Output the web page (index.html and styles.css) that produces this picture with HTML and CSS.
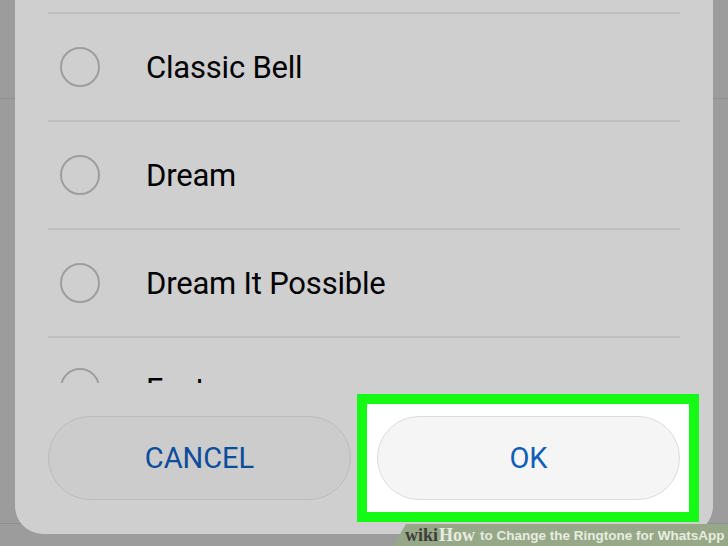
FILE: index.html
```html
<!DOCTYPE html>
<html>
<head>
<meta charset="utf-8">
<link rel="stylesheet" href="styles.css">
</head>
<body>
<div class="screen">
  <div class="dialog">
    <div class="list">
      <div class="row"><span class="radio"></span><span class="label">Classic Bell</span></div>
      <div class="row"><span class="radio"></span><span class="label">Dream</span></div>
      <div class="row"><span class="radio"></span><span class="label">Dream It Possible</span></div>
      <div class="row"><span class="radio"></span><span class="label">Fast</span></div>
    </div>
    <div class="actions">
      <button class="btn btn-cancel">CANCEL</button>
      <div class="highlight">
        <button class="btn btn-ok">OK</button>
      </div>
    </div>
  </div>
  <div class="watermark"><span class="wiki">wiki</span><span class="how">How</span><span class="title">to Change the Ringtone for WhatsApp</span></div>
</div>
</body>
</html>
```
FILE: styles.css
```css
html, body {
  margin: 0;
  padding: 0;
}
body {
  width: 728px;
  height: 546px;
  overflow: hidden;
  font-family: Roboto, "Liberation Sans", sans-serif;
}
.screen {
  position: relative;
  width: 728px;
  height: 546px;
  overflow: hidden;
  background:
    linear-gradient(#8f8f8f, #8f8f8f) 0 98px / 100% 1px no-repeat,
    linear-gradient(#8f8f8f, #8f8f8f) 0 523px / 100% 1px no-repeat,
    #9c9c9c;
}
.dialog {
  margin: 0 15px;
  height: 534px;
  background: #cfcfcf;
  border-radius: 0 0 28px 28px;
  display: flex;
  flex-direction: column;
  box-sizing: border-box;
  padding: 12px 33px 34px;
}
.list {
  height: 371px;
  overflow: hidden;
  flex: none;
}
.row {
  display: flex;
  align-items: center;
  height: 106px;
  border-top: 2px solid #bebebe;
  flex: none;
}
.row:nth-child(4) {
  align-items: flex-start;
  padding-top: 30px;
  box-sizing: border-box;
}
.radio {
  width: 36px;
  height: 36px;
  border: 2px solid #9e9e9e;
  border-radius: 50%;
  margin-left: 12px;
  flex: none;
}
.label {
  margin-left: 46px;
  font-size: 31px;
  color: #000;
  letter-spacing: -0.2px;
}
.row:nth-child(4) .label {
  line-height: 36px;
  margin-top: 4px;
}
.actions {
  margin-top: 33px;
  display: flex;
  height: 84px;
  flex: none;
}
.btn {
  height: 84px;
  width: 303px;
  border-radius: 42px;
  font-family: Roboto, "Liberation Sans", sans-serif;
  font-size: 29px;
  color: #0a4d9c;
  padding: 0;
  box-sizing: border-box;
  flex: none;
}
.btn-cancel {
  background: #cccccc;
  border: 1px solid #bcbcbc;
}
.highlight {
  margin: -22px -19px -22px 6px;
  padding: 12px 9px 12px 10px;
  border: 10px solid #14fa14;
  background: #ffffff;
  flex: none;
}
.btn-ok {
  background: #f5f5f5;
  border: 1px solid #dcdcdc;
  color: #0e5fb5;
}
.watermark {
  position: absolute;
  left: 393px;
  right: 0;
  bottom: 0;
  height: 22px;
  background: #97a888;
  clip-path: polygon(13px 0, 100% 0, 100% 100%, 0 100%);
  display: flex;
  align-items: center;
  padding-left: 12px;
  box-sizing: border-box;
  white-space: nowrap;
}
.wiki {
  font-family: "Liberation Serif", serif;
  font-weight: bold;
  font-size: 18px;
  color: #3b3f38;
}
.how {
  font-family: "Liberation Serif", serif;
  font-weight: bold;
  font-size: 18px;
  color: #e7ede0;
  margin-left: 1px;
}
.title {
  font-family: "Liberation Sans", sans-serif;
  font-weight: bold;
  font-size: 13.5px;
  color: #e7ede0;
  margin-left: 5px;
}
```
